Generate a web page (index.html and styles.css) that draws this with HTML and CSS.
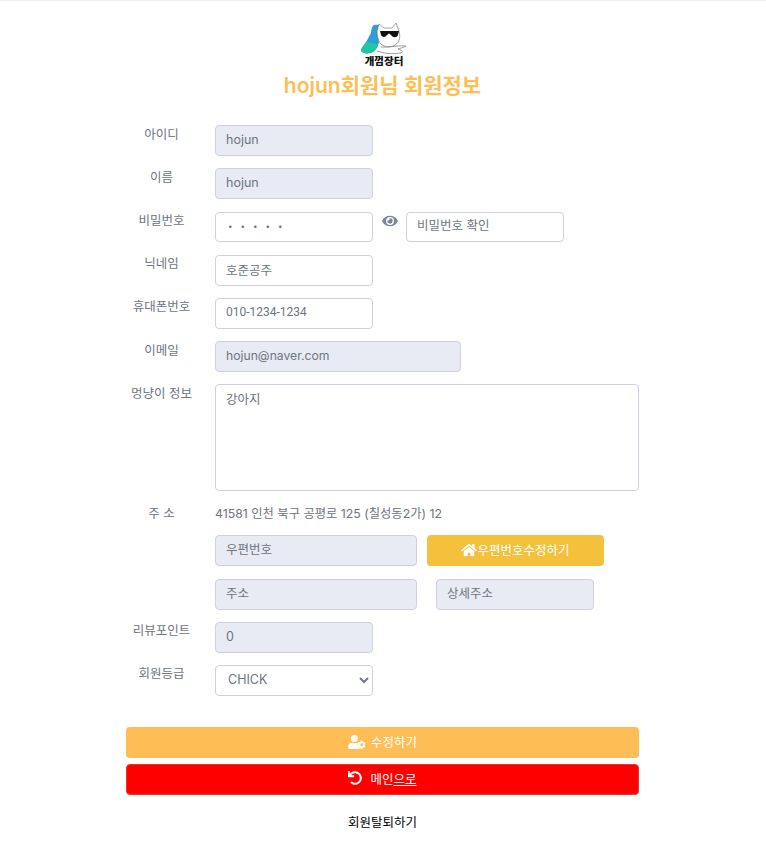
FILE: index.html
```html
<!DOCTYPE html>
<html lang="ko">
<head>
<meta charset="utf-8">
<title>회원정보</title>
<link rel="stylesheet" href="styles.css">
</head>
<body>
<main class="page">
  <header class="head">
    <div class="logo">
      <svg class="logo-art" viewBox="0 0 46 33" width="46" height="33" aria-hidden="true">
        <path d="M13 3 C17 2 21 4 22 8 C23 13 20 17 18 20 C17 24 15 28 12 30 C8 32 2 32 0 29 C0 26 3 23 5 20 C7 17 8 14 10 11 C10 8 11 4 13 3Z" fill="#2a9fd8"/>
        <path d="M0 29 C0 26 3 23 6 20 C10 21 15 21 17 23 C16 26 14 29 12 30 C8 32 2 32 0 29Z" fill="#1fc8a0"/>
        <path d="M16 9 L18 2 L23 6 L31 6 L35 1 L38 9 C40 16 38 22 32 24 C27 26 21 24 19 21 C17 18 16 13 16 9Z" fill="#fff" stroke="#666" stroke-width=".6"/>
        <path d="M19 9 H38 L37 13 C36 16 32 16 30 13 L28 11.500 L26 13 C24 16 21 15 20 13Z" fill="#111"/>
        <path d="M20 25 C27 26 36 23 45 24 C42 26 39 26 37 27 C41 28 43 30 40 31 C32 32 24 32 16 29" fill="none" stroke="#777" stroke-width=".7"/>
      </svg>
      <span class="logo-name">개껌장터</span>
    </div>
    <h1 class="title">hojun회원님 회원정보</h1>
  </header>

  <form class="form">
    <div class="row">
      <label class="label">아이디</label>
      <input class="field w158 locked" value="hojun" readonly>
    </div>
    <div class="row">
      <label class="label">이름</label>
      <input class="field w158 locked" value="hojun" readonly>
    </div>
    <div class="row">
      <label class="label">비밀번호</label>
      <input class="field w158 secret" type="password" value="12345">
      <svg class="eye" viewBox="0 0 576 512" width="16" height="14" aria-hidden="true"><path fill="#7b8794" d="M572.5 241.4C518.3 135.6 410.9 64 288 64S57.7 135.6 3.5 241.4a32.4 32.4 0 0 0 0 29.2C57.7 376.4 165.1 448 288 448s230.3-71.6 284.5-177.4a32.4 32.4 0 0 0 0-29.2zM288 400a144 144 0 1 1 144-144 143.9 143.9 0 0 1-144 144zm0-240a95.3 95.3 0 0 0-25.3 3.8 47.9 47.9 0 0 1-66.9 66.9A95.8 95.8 0 1 0 288 160z"/></svg>
      <input class="field w158" placeholder="비밀번호 확인">
    </div>
    <div class="row">
      <label class="label">닉네임</label>
      <input class="field w158" value="호준공주">
    </div>
    <div class="row">
      <label class="label">휴대폰번호</label>
      <input class="field w158 digits" value="010-1234-1234">
    </div>
    <div class="row">
      <label class="label">이메일</label>
      <input class="field w246 locked email" value="hojun@naver.com" readonly>
    </div>
    <div class="row">
      <label class="label">멍냥이 정보</label>
      <textarea class="field area">강아지</textarea>
    </div>
    <div class="row row-text">
      <label class="label label-text">주 소</label>
      <span class="addr">41581 인천 북구 공평로 125 (칠성동2가) 12</span>
    </div>
    <div class="row row-indent row-zip">
      <input class="field w202 locked" placeholder="우편번호" readonly>
      <button type="button" class="zip-btn">
        <svg viewBox="0 0 576 512" width="16" height="14" aria-hidden="true"><path fill="#fff" d="M280.4 148.3 96 300.1V464a16 16 0 0 0 16 16l112.100-.3a16 16 0 0 0 15.900-16V368a16 16 0 0 1 16-16h64a16 16 0 0 1 16 16v95.600a16 16 0 0 0 16 16.100L464 480a16 16 0 0 0 16-16V300L295.700 148.300a12.200 12.200 0 0 0-15.300 0zM571.600 251.500 488 182.600V44.100a12 12 0 0 0-12-12h-56a12 12 0 0 0-12 12v72.600L318.500 43a48 48 0 0 0-61 0L4.300 251.500a12 12 0 0 0-1.600 16.900l25.500 31A12 12 0 0 0 45.200 301l235.200-193.700a12.200 12.200 0 0 1 15.300 0L530.900 301a12 12 0 0 0 16.900-1.600l25.500-31a12 12 0 0 0-1.700-16.900z"/></svg><span>우편번호수정하기</span>
      </button>
    </div>
    <div class="row row-indent row-road">
      <input class="field w202 locked" placeholder="주소" readonly>
      <input class="field w158 locked" placeholder="상세주소" readonly>
    </div>
    <div class="row">
      <label class="label">리뷰포인트</label>
      <input class="field w158 locked" value="0" readonly>
    </div>
    <div class="row row-last">
      <label class="label">회원등급</label>
      <select class="field w158 grade"><option>CHICK</option></select>
    </div>

    <button type="button" class="action action-save">
      <svg viewBox="0 0 640 512" width="18" height="14" aria-hidden="true"><path fill="#fff" d="M224 256A128 128 0 1 0 224 0a128 128 0 0 0 0 256zm89.600 32h-16.700a174.100 174.100 0 0 1-145.800 0h-16.700A134.400 134.400 0 0 0 0 422.400V464a48 48 0 0 0 48 48h352a48 48 0 0 0 34-14c-12-6-18-18-18-32v-12c-14 8-28 6-38-4-14-14-24-32-30-52-4-14 0-28 12-38l10-8-10-8c-12-10-16-24-12-38 1-4 2-7 4-11z"/><path fill="#fff" d="M628 392l-26-15a118 118 0 0 0 0-42l26-15c3-2 4-5 3-8a152 152 0 0 0-33-58c-2-2-6-3-9-1l-26 15a118 118 0 0 0-36-21v-30c0-4-2-7-6-7a153 153 0 0 0-67 0c-3 0-6 3-6 7v30a118 118 0 0 0-36 21l-26-15c-3-2-7-1-9 1a152 152 0 0 0-33 58c-1 3 0 6 3 8l26 15a118 118 0 0 0 0 42l-26 15c-3 2-4 5-3 8a152 152 0 0 0 33 58c2 2 6 3 9 1l26-15a118 118 0 0 0 36 21v30c0 4 3 7 6 7a153 153 0 0 0 67 0c4 0 6-3 6-7v-30a118 118 0 0 0 36-21l26 15c3 2 7 1 9-1a152 152 0 0 0 33-58c1-3 0-6-3-8zm-132 18a54 54 0 1 1 0-108 54 54 0 0 1 0 108z"/></svg>
      <span>수정하기</span>
    </button>
    <a class="action action-main" href="#">
      <svg viewBox="0 0 512 512" width="14" height="14" aria-hidden="true"><path fill="#fff" d="M212.300 224.300H12c-6.600 0-12-5.400-12-12V12C0 5.400 5.400 0 12 0h48c6.600 0 12 5.400 12 12v78.100C117.800 39.300 184.300 7.500 258.200 8c136.900 1 246.400 111.600 246.800 248.500C505.500 393.300 394.300 504 257.500 504c-64.100 0-122.500-24.300-166.500-64.200-5.100-4.600-5.300-12.600-.5-17.400l34-34c4.500-4.500 11.700-4.700 16.400-.5C172.900 415.900 213.200 432 257.500 432c97.300 0 174.500-78.800 174.500-176 0-97.300-79.200-176-176.500-176-58.500 0-110.300 28.500-142.300 72.300h98.300c6.600 0 12 5.400 12 12v48c.8 6.600-4.600 12-11.200 12z"/></svg>
      <span class="main-text">메인<u>으로</u></span>
    </a>
    <a class="leave" href="#">회원탈퇴하기</a>
  </form>
</main>
</body>
</html>
```

FILE: styles.css
```css
* {
  box-sizing: border-box;
}

html,
body {
  margin: 0;
  padding: 0;
  background: #fff;
}

body {
  border-top: 1px solid #eeeeee;
  font-family: Inter, "Noto Sans CJK KR", sans-serif;
  font-size: 12.5px;
  color: #6e7480;
}

.page {
  width: 513px;
  margin: 0 0 0 126px;
}

.head {
  display: flex;
  flex-direction: column;
  align-items: center;
  padding-top: 21px;
  height: 124.2px;
}

.logo {
  display: flex;
  flex-direction: column;
  align-items: center;
  width: 46px;
  height: 47px;
  margin-left: 3px;
}

.logo-art {
  display: block;
  flex: none;
}

.logo-name {
  font-family: "Noto Sans CJK KR", sans-serif;
  font-size: 10.5px;
  line-height: 12px;
  font-weight: 900;
  color: #111;
  white-space: nowrap;
}

.title {
  margin: 0;
  font-size: 21px;
  line-height: 34px;
  font-weight: 600;
  color: #ffbe55;
}

.row {
  display: flex;
  align-items: flex-start;
  margin-bottom: 12.4px;
}

.label {
  flex: none;
  width: 71px;
  margin-right: 18px;
  padding-top: 0.4px;
  font-size: 12.5px;
  line-height: 18px;
  text-align: center;
  white-space: nowrap;
  color: #6e7480;
}

.field {
  display: block;
  flex: none;
  height: 30.8px;
  padding: 0 10px 2px;
  border: 1px solid #d0cfe2;
  border-radius: 4px;
  background: #fff;
  font: inherit;
  font-size: 12.5px;
  color: #6e7480;
  outline: none;
}

.field::placeholder {
  color: #6e7480;
  opacity: 1;
}

.locked {
  background: #e8ebf3;
}

.digits {
  font-family: Roboto, sans-serif;
  font-size: 12px;
}

.email {
  font-size: 12.2px;
}

.secret {
  padding-left: 12px;
  letter-spacing: 8px;
  font-size: 8px;
}

.w158 {
  width: 158px;
}

.w202 {
  width: 202px;
}

.w246 {
  width: 246px;
}

.eye {
  flex: none;
  margin: 2px 8px 0 9px;
}

.area {
  width: 424px;
  height: 107px;
  padding-top: 4px;
  resize: none;
}

.row-text {
  margin-top: 13px;
  margin-bottom: 13px;
  height: 18px;
  align-items: center;
}

.addr {
  padding-top: 1px;
  font-size: 12.3px;
  line-height: 18px;
}

.row-indent {
  padding-left: 89px;
}

.row-zip {
  gap: 10px;
}

.row-road {
  gap: 19px;
}

.zip-btn {
  display: flex;
  align-items: center;
  justify-content: center;
  width: 177px;
  height: 31px;
  padding: 0 0 2px;
  border: 0;
  border-radius: 4px;
  background: #f5c13c;
  color: #fff;
  font: inherit;
  font-size: 12.5px;
}

.row-last {
  margin-bottom: 31px;
}

.grade {
  padding-left: 8px;
}

.action {
  display: flex;
  align-items: center;
  justify-content: center;
  gap: 5px;
  width: 513px;
  height: 31px;
  margin-bottom: 6px;
  padding-bottom: 2px;
  border: 0;
  border-radius: 4px;
  font: inherit;
  font-size: 12.5px;
  color: #fff;
  text-decoration: none;
}

.action-save {
  background: #ffbe55;
}

.action-main {
  gap: 8px;
  background: #ff0000;
  border: 1px solid #e8392f;
}

.leave {
  display: block;
  margin-top: 19px;
  font-size: 12.5px;
  line-height: 18px;
  text-align: center;
  color: #000;
  text-decoration: none;
}
```
